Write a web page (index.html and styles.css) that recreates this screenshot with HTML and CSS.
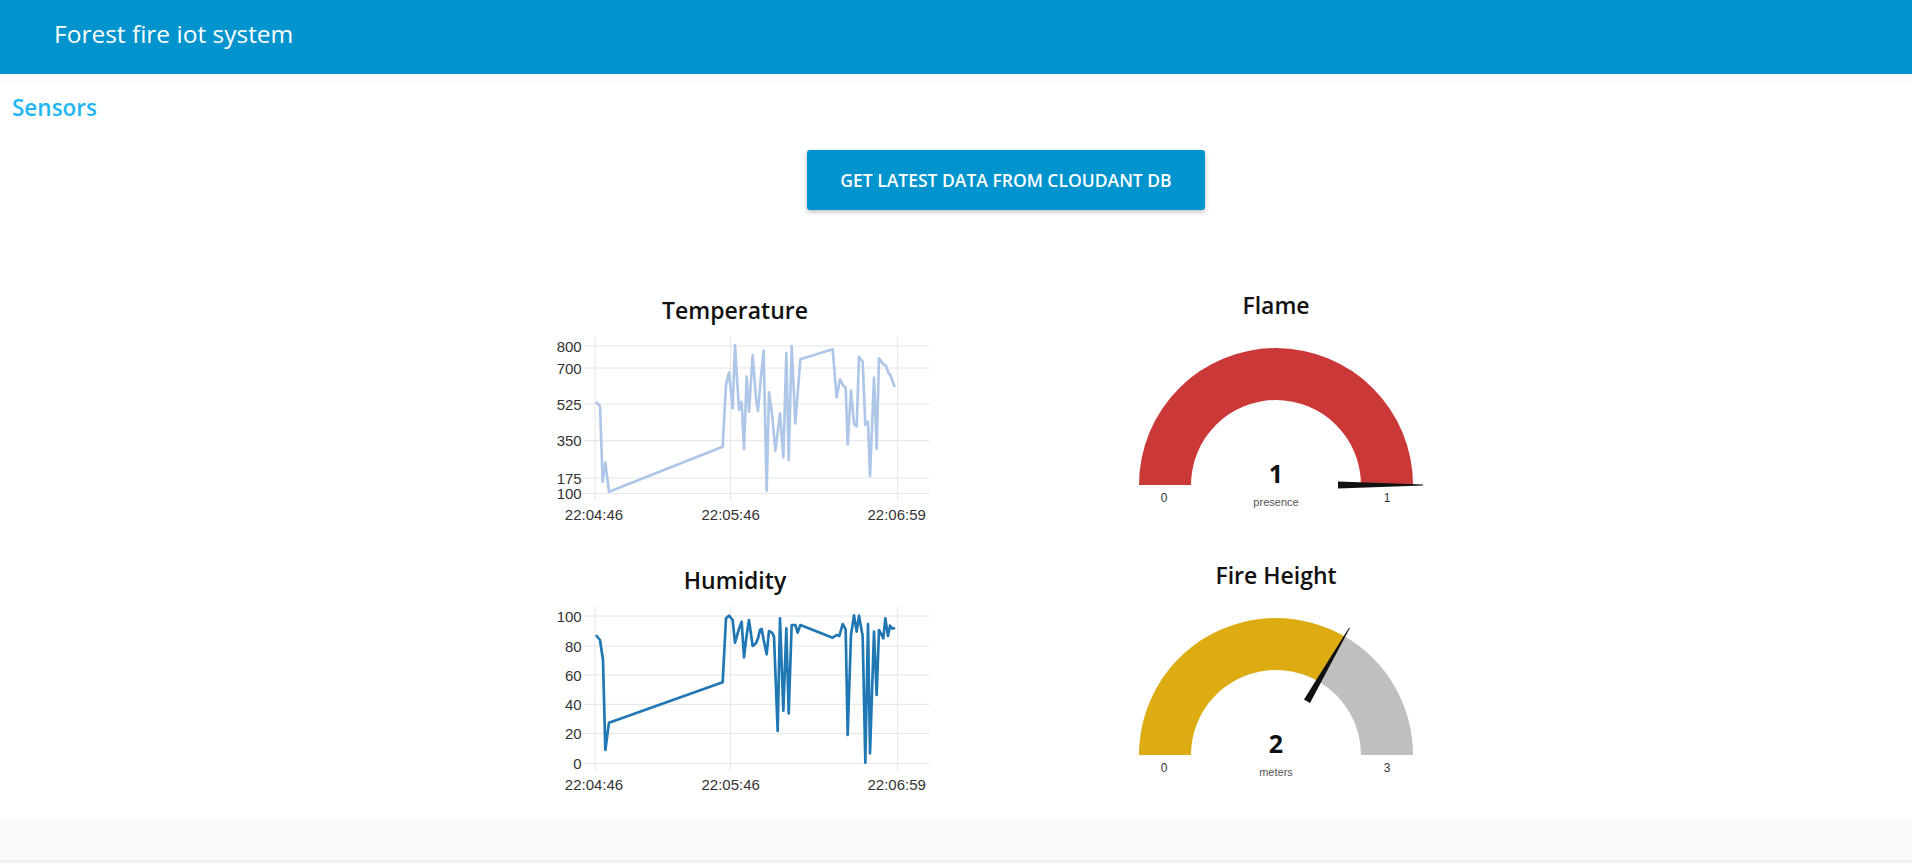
FILE: index.html
```html
<!DOCTYPE html>
<html lang="en">
<head>
<meta charset="utf-8">
<title>Forest fire iot system</title>
<link rel="stylesheet" href="styles.css">
</head>
<body>
<header class="toolbar">
  <h1 class="toolbar-title">Forest fire iot system</h1>
</header>
<div class="strip"></div>
<main class="group">
  <h2 class="group-title">Sensors</h2>
  <div class="actions">
    <button class="btn">GET LATEST DATA FROM CLOUDANT DB</button>
  </div>
  <div class="widgets">
    <div class="col col-charts">
      <section class="widget">
        <h3 class="widget-title chart-title">Temperature</h3>
        <svg class="chart" width="400" height="200" viewBox="60 150 1200 600">
          <g class="grid">
            <line x1="190" y1="198" x2="1228" y2="198"/>
            <line x1="190" y1="264" x2="1228" y2="264"/>
            <line x1="190" y1="372" x2="1228" y2="372"/>
            <line x1="190" y1="482" x2="1228" y2="482"/>
            <line x1="190" y1="594" x2="1228" y2="594"/>
            <line x1="190" y1="640" x2="1228" y2="640"/>
            <line x1="225" y1="170" x2="225" y2="662"/>
            <line x1="632" y1="170" x2="632" y2="662"/>
            <line x1="1133" y1="170" x2="1133" y2="662"/>
          </g>
          <g class="ylab">
            <text x="185" y="198">800</text>
            <text x="185" y="264">700</text>
            <text x="185" y="372">525</text>
            <text x="185" y="482">350</text>
            <text x="185" y="594">175</text>
            <text x="185" y="640">100</text>
          </g>
          <g class="xlab">
            <text x="222" y="720">22:04:46</text>
            <text x="632" y="720">22:05:46</text>
            <text x="1130" y="720">22:06:59</text>
          </g>
          <polyline class="line line-temp" points="230,368 240,378 248,605 256,548 267,635 608,500 618,315 627,277 638,385 645,195 657,390 665,365 672,507 680,290 687,395 698,225 708,355 714,393 722,300 731,212 740,632 747,337 756,400 766,512 780,400 790,532 799,220 806,540 815,198 826,430 841,238 938,208 950,352 960,298 970,318 977,322 983,493 993,332 1002,432 1010,440 1017,230 1028,245 1036,435 1044,425 1050,588 1062,293 1070,507 1077,235 1090,253 1098,258 1106,280 1112,287 1123,318"/>
        </svg>
      </section>
      <section class="widget">
        <h3 class="widget-title chart-title">Humidity</h3>
        <svg class="chart" width="400" height="200" viewBox="60 150 1200 600">
          <g class="grid">
            <line x1="190" y1="198" x2="1228" y2="198"/>
            <line x1="190" y1="288" x2="1228" y2="288"/>
            <line x1="190" y1="375" x2="1228" y2="375"/>
            <line x1="190" y1="463" x2="1228" y2="463"/>
            <line x1="190" y1="550" x2="1228" y2="550"/>
            <line x1="190" y1="640" x2="1228" y2="640"/>
            <line x1="225" y1="170" x2="225" y2="662"/>
            <line x1="632" y1="170" x2="632" y2="662"/>
            <line x1="1133" y1="170" x2="1133" y2="662"/>
          </g>
          <g class="ylab">
            <text x="185" y="198">100</text>
            <text x="185" y="288">80</text>
            <text x="185" y="375">60</text>
            <text x="185" y="463">40</text>
            <text x="185" y="550">20</text>
            <text x="185" y="640">0</text>
          </g>
          <g class="xlab">
            <text x="222" y="720">22:04:46</text>
            <text x="632" y="720">22:05:46</text>
            <text x="1130" y="720">22:06:59</text>
          </g>
          <polyline class="line line-hum" points="230,258 240,270 249,330 256,600 267,518 608,397 618,205 627,197 638,210 645,278 657,236 665,215 672,322 680,255 687,210 698,288 708,280 714,265 720,240 725,237 731,270 740,313 747,243 756,248 762,260 773,543 780,205 790,482 799,235 806,490 815,225 826,225 833,248 841,225 938,263 950,255 958,258 968,222 977,238 983,555 993,255 1002,196 1010,245 1017,197 1028,258 1036,638 1044,222 1050,610 1062,245 1070,435 1077,240 1085,255 1090,265 1096,205 1104,258 1110,227 1116,235 1122,235"/>
        </svg>
      </section>
    </div>
    <div class="col col-gauges">
      <section class="widget">
        <h3 class="widget-title">Flame</h3>
        <svg class="gauge" width="320" height="200" viewBox="0 0 320 200">
          <path class="arc-flame" d="M23 160 A137 137 0 0 1 297 160 L245 160 A85 85 0 0 0 75 160 Z"/>
          <polygon class="needle" points="222,156.5 307,159.6 307,160.4 222,163.5"/>
          <text class="g-value" x="160" y="158">1</text>
          <text class="g-lim" x="48" y="177">0</text>
          <text class="g-lim" x="271" y="177">1</text>
          <text class="g-unit" x="160" y="181">presence</text>
        </svg>
      </section>
      <section class="widget">
        <h3 class="widget-title">Fire Height</h3>
        <svg class="gauge" width="320" height="200" viewBox="0 0 320 200">
          <path class="arc-yellow" d="M23 160 A137 137 0 0 1 228.5 41.35 L202.5 86.39 A85 85 0 0 0 75 160 Z"/>
          <path class="arc-gray" d="M228.5 41.35 A137 137 0 0 1 297 160 L245 160 A85 85 0 0 0 202.5 86.39 Z"/>
          <g transform="rotate(-60 160 160)">
            <polygon class="needle" points="222,156.5 307,159.6 307,160.4 222,163.5"/>
          </g>
          <text class="g-value" x="160" y="158">2</text>
          <text class="g-lim" x="48" y="177">0</text>
          <text class="g-lim" x="271" y="177">3</text>
          <text class="g-unit" x="160" y="181">meters</text>
        </svg>
      </section>
    </div>
  </div>
</main>
<footer class="footer"></footer>
</body>
</html>
```
FILE: styles.css
```css
* { box-sizing: border-box; }
html, body {
  margin: 0;
  padding: 0;
  background: #fafafa;
  font-family: "Open Sans", "Noto Sans", "DejaVu Sans", sans-serif;
  overflow: hidden;
}
.toolbar {
  height: 74px;
  background: #0094ce;
  display: flex;
  align-items: center;
  padding-left: 54px;
}
.toolbar-title {
  margin: 0;
  color: #fff;
  font-size: 24.5px;
  font-weight: 400;
  line-height: 30px;
  padding-bottom: 6px;
}
.strip {
  height: 8px;
  background: #fafafa;
}
.group {
  background: #fff;
  height: 737px;
  padding-top: 14px;
  overflow: hidden;
}
.group-title {
  margin: 0;
  padding-left: 12px;
  font-size: 22.5px;
  font-weight: 600;
  line-height: 24px;
  color: #1fb6f3;
}
.actions {
  display: flex;
  padding-left: 807px;
  margin-top: 30px;
}
.btn {
  width: 398px;
  height: 60px;
  border: 0;
  border-radius: 3px;
  background: #0094ce;
  color: #fff;
  font-family: inherit;
  font-size: 17.5px;
  font-weight: 600;
  letter-spacing: 0;
  box-shadow: 0 2px 5px rgba(0,0,0,0.26);
  padding: 0;
}
.widgets {
  display: flex;
  align-items: flex-start;
  margin-left: 540px;
  margin-top: 75px;
  gap: 176px;
}
.col {
  display: flex;
  flex-direction: column;
  gap: 30px;
}
.col-charts { width: 400px; padding-top: 5px; }
.col-gauges { width: 320px; }
.widget {
  display: flex;
  flex-direction: column;
}
.widget-title {
  margin: 0;
  height: 40px;
  line-height: 40px;
  font-size: 23px;
  font-weight: 600;
  text-align: center;
  color: #111;
}
.chart-title { padding-right: 10px; }
.chart, .gauge { display: block; }
.grid line {
  stroke: #e4e4e4;
  stroke-width: 3;
}
.ylab text {
  font-family: "Liberation Sans", Arial, sans-serif;
  font-size: 45px;
  fill: #333;
  text-anchor: end;
  dominant-baseline: central;
}
.xlab text {
  font-family: "Liberation Sans", Arial, sans-serif;
  font-size: 45px;
  fill: #333;
  text-anchor: middle;
}
.line {
  fill: none;
  stroke-linejoin: round;
  stroke-linecap: round;
}
.line-temp { stroke: #aec7e8; stroke-width: 8; }
.line-hum { stroke: #1f77b4; stroke-width: 8; }
.arc-flame { fill: #ca3838; }
.arc-yellow { fill: #dcac12; }
.arc-gray { fill: #bfbfbf; }
.needle { fill: #111; }
.g-value {
  font-family: "Open Sans", sans-serif;
  font-size: 25px;
  font-weight: 700;
  fill: #111;
  text-anchor: middle;
}
.g-lim {
  font-family: "Liberation Sans", Arial, sans-serif;
  font-size: 12px;
  fill: #333;
  text-anchor: middle;
}
.g-unit {
  font-family: "Liberation Sans", Arial, sans-serif;
  font-size: 11px;
  fill: #555;
  text-anchor: middle;
}
.footer {
  height: 43px;
  background: #fafafa;
  border-bottom: 2px solid #eeeeee;
}
```
